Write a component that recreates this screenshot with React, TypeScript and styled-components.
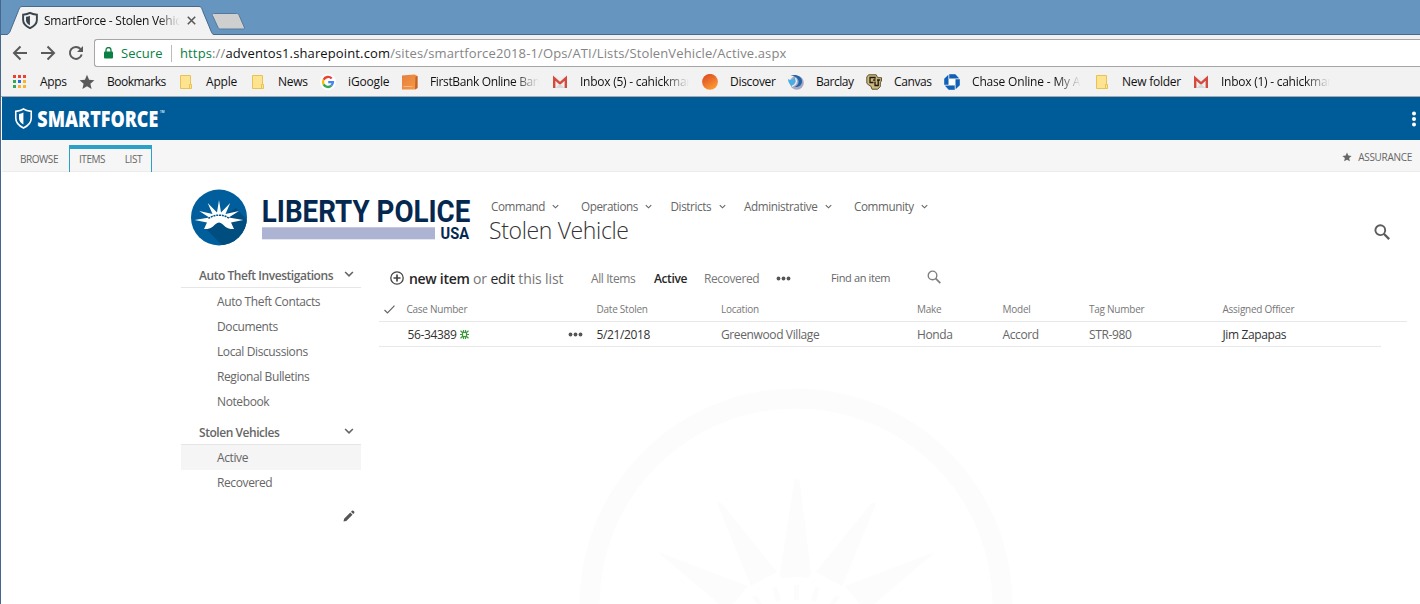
import React from "react";
import styled, { createGlobalStyle } from "styled-components";

const GlobalStyle = createGlobalStyle`
  * { box-sizing: border-box; }
  html, body { margin: 0; padding: 0; }
  body {
    font-family: "Open Sans", "Noto Sans", sans-serif;
    font-size: 12px;
    color: #666;
    background: #fff;
    overflow: hidden;
  }
  svg { display: block; flex: none; }
  ul { list-style: none; margin: 0; padding: 0; }
`;

const Window = styled.div`
  width: 1420px;
  height: 604px;
  overflow: hidden;
  display: flex;
  flex-direction: column;
  border-left: 1px solid #47688c;
`;

/* Browser chrome */

const TabStrip = styled.div`
  height: 35px;
  flex: none;
  display: flex;
  align-items: flex-end;
  background: #6696bf;
  border-bottom: 1px solid #47698b;
`;

const Tab = styled.div`
  position: relative;
  width: 207px;
  height: 29px;
  margin: 0 0 -1px 6px;
  flex: none;
`;

const TabShape = styled.svg`
  position: absolute;
  inset: 0;
`;

const TabContent = styled.div`
  position: relative;
  height: 28px;
  display: flex;
  align-items: center;
  padding: 0 0 0 15px;
`;

const Fade = styled.span<{ $width: number }>`
  width: ${(p) => p.$width}px;
  overflow: hidden;
  white-space: nowrap;
  -webkit-mask-image: linear-gradient(to right, #000 calc(100% - 22px), transparent);
  mask-image: linear-gradient(to right, #000 calc(100% - 22px), transparent);
`;

const TabTitle = styled(Fade)`
  margin-left: 6px;
  color: #111;
  font-size: 12px;
  letter-spacing: -0.24px;
`;

const TabClose = styled.svg`
  margin-left: 7px;
`;

const NewTab = styled.svg`
  margin: 0 0 4px -3px;
`;

const Toolbar = styled.div`
  height: 32px;
  flex: none;
  display: flex;
  align-items: center;
  background: #f2f2f2;
  padding: 4px 0 0 11px;
`;

const NavButtons = styled.div`
  display: flex;
  width: 82px;
  gap: 12px;
`;

const Omnibox = styled.div`
  flex: 1;
  height: 28px;
  display: flex;
  align-items: center;
  background: #fff;
  border: 1px solid #a6a6a6;
  border-right: 0;
  border-radius: 3px 0 0 3px;
  padding-left: 9px;
  font-size: 14px;
`;

const Secure = styled.span`
  color: #0b8043;
  width: 51px;
  margin-left: 8px;
  padding-right: 9px;
  border-right: 1px solid #bbb;
  line-height: 17px;
  font-size: 13px;
  letter-spacing: 0.05px;
`;

const Url = styled.span`
  margin-left: 8px;
  color: #858585;
  font-size: 13px;
  letter-spacing: 0.13px;
  white-space: nowrap;
  em { font-style: normal; color: #0b8043; }
  b { font-weight: 400; color: #111; }
`;

const BookmarkBar = styled.div`
  height: 30px;
  flex: none;
  display: flex;
  align-items: center;
  background: #f2f2f2;
  border-bottom: 1px solid #a9a9a9;
  padding-left: 11px;
`;

const BookmarkItem = styled.div<{ $slot: number }>`
  width: ${(p) => p.$slot}px;
  flex: none;
  display: flex;
  align-items: center;
  gap: 12px;
  color: #111;
`;

const BookmarkLabel = styled.span<{ $clip?: boolean; $track?: number }>`
  white-space: nowrap;
  letter-spacing: ${(p) => p.$track ?? -0.3}px;
  ${(p) =>
    p.$clip &&
    `width: 109px;
     overflow: hidden;
     mask-image: linear-gradient(to right, #000 84px, transparent);`}
`;

/* SharePoint page */

const Suite = styled.header`
  height: 43px;
  flex: none;
  margin-left: 1px;
  display: flex;
  align-items: center;
  justify-content: space-between;
  background: #005c99;
  padding: 0 3px 0 12px;
`;

const Ribbon = styled.div`
  height: 32px;
  flex: none;
  margin-left: 1px;
  display: flex;
  justify-content: space-between;
  background: #f6f6f6;
  border-bottom: 1px solid #ececec;
  font-size: 10px;
  color: #666;
  letter-spacing: -0.45px;
`;

const RibbonTabs = styled.div`
  display: flex;
  align-items: flex-start;
`;

const RibbonTab = styled.span`
  width: 67px;
  padding-left: 18px;
  line-height: 14px;
  margin-top: 12px;
`;

const RibbonGroup = styled.div`
  width: 83px;
  height: 27px;
  margin-top: 5px;
  display: flex;
  justify-content: space-between;
  border: 1px solid #2ba1c8;
  border-top-width: 4px;
  border-bottom: 0;
  padding: 3px 9px 0;
  line-height: 14px;
`;

const Follow = styled.div`
  display: flex;
  align-items: center;
  gap: 6px;
  padding: 3px 8px 0 0;
  letter-spacing: -0.3px;
`;

const Page = styled.main`
  position: relative;
  flex: 1;
  min-height: 0;
  display: flex;
  flex-direction: column;
  background: #fff;
`;

const Watermark = styled.svg`
  position: absolute;
  left: 577px;
  top: 216px;
`;

const Masthead = styled.div`
  position: relative;
  height: 90px;
  flex: none;
  display: flex;
  padding: 17px 30px 0 189px;
`;

const MastheadText = styled.div`
  flex: 1;
  padding: 7px 0 0 19px;
`;

const TopNav = styled.nav`
  display: flex;
  height: 20px;
  align-items: center;
`;

const TopNavItem = styled.div<{ $slot: number; $text: number }>`
  width: ${(p) => p.$slot}px;
  display: flex;
  align-items: center;
  white-space: nowrap;
  font-size: 11.7px;
  letter-spacing: -0.4px;
  span { width: ${(p) => p.$text + 6}px; }
`;

const Title = styled.h1`
  margin: 0 0 0 -2px;
  font-size: 23px;
  font-weight: 300;
  line-height: 28px;
  color: #333;
  letter-spacing: -0.35px;
`;

const SearchSlot = styled.div`
  padding-top: 35px;
`;

const Columns = styled.div`
  position: relative;
  display: flex;
  padding-left: 180px;
`;

const Sidebar = styled.aside`
  width: 180px;
  flex: none;
`;

const NavHeading = styled.div`
  height: 26px;
  display: flex;
  align-items: center;
  justify-content: space-between;
  border-bottom: 1px solid #e6e6e6;
  padding: 1px 7px 0 18px;
  font-weight: 600;
  letter-spacing: -0.45px;
  svg { margin-top: -2px; }
`;

const NavList = styled.ul`
  && { padding: 1px 0 5px; }
`;

const NavItem = styled.li<{ $active?: boolean }>`
  height: 25px;
  line-height: 25px;
  padding-left: 36px;
  letter-spacing: -0.39px;
  background: ${(p) => (p.$active ? "#f5f5f5" : "transparent")};
`;

const EditRow = styled.div`
  display: flex;
  justify-content: flex-end;
  padding-right: 6px;
`;

const Content = styled.section`
  margin-left: 18px;
  width: 1028px;
`;

const ListBar = styled.div`
  height: 34px;
  display: flex;
  align-items: center;
  padding: 0 0 2px 11px;
  white-space: nowrap;
`;

const NewItem = styled.div`
  width: 182px;
  margin-left: 5px;
  font-size: 14px;
  color: #777;
  letter-spacing: -0.13px;
  b { color: #262626; font-weight: 600; letter-spacing: -0.3px; }
  em { color: #262626; font-style: normal; }
`;

const View = styled.span<{ $slot: number; $current?: boolean }>`
  width: ${(p) => p.$slot}px;
  color: ${(p) => (p.$current ? "#262626" : "#777")};
  font-weight: ${(p) => (p.$current ? 600 : 400)};
  letter-spacing: -0.4px;
`;

const Find = styled.span`
  width: 97px;
  margin: -2px 0 0 40px;
  font-size: 11px;
  letter-spacing: -0.37px;
`;

const FindButton = styled.div`
  margin: -3px 0 0 -1px;
`;

const Row = styled.div<{ $width: number }>`
  width: ${(p) => p.$width}px;
  height: 25px;
  display: grid;
  grid-template-columns: 27.5px 161.5px 28.500px 124.500px 196px 85.500px 86.500px 133.500px 1fr;
  align-items: center;
  border-bottom: 1px solid #e8e8e8;
  letter-spacing: -0.38px;
  white-space: nowrap;
`;

const HeadRow = styled(Row)`
  height: 26px;
  font-size: 10px;
  color: #777;
  letter-spacing: -0.25px;
`;

const Cell = styled.span<{ $dark?: boolean }>`
  display: flex;
  align-items: center;
  gap: 3px;
  color: ${(p) => (p.$dark ? "#333" : "#666")};
`;

const CaseCell = styled(Cell)`
  padding-left: 1px;
  letter-spacing: -0.36px;
`;

const Check = styled.svg`
  margin: 2px 0 0 5px;
`;

const SHIELD = "M10 1C7.6 2.4 4.6 3 1.4 3.3V10c0 4.6 3.6 7.800 8.600 10 5-2.200 8.600-5.400 8.600-10V3.300C15.400 3 12.400 2.400 10 1z";

const Shield = ({ w, h, color, weight }: { w: number; h: number; color: string; weight: number }) => (
  <svg width={w} height={h} viewBox="0 0 20 21" preserveAspectRatio="none">
    <path d={SHIELD} fill="none" stroke={color} strokeWidth={weight} />
    <path d="M9.900 4.600C8 5.400 6.800 5.700 5 6v4.200c0 2.600 1.700 4.800 4.900 6.200z" fill={color} />
  </svg>
);

const Chevron = ({ size = 7, weight = 1.3 }: { size?: number; weight?: number }) => (
  <svg width={size} height={size} viewBox="0 0 8 8" fill="none" stroke="#666" strokeWidth={weight}>
    <path d="M.9 2.400 4 5.500l3.100-3.100" />
  </svg>
);

const Dots = () => (
  <svg width="15" height="5" viewBox="0 0 15 5" fill="#555">
    <circle cx="2.500" cy="2.500" r="1.900" />
    <circle cx="7.500" cy="2.500" r="1.900" />
    <circle cx="12.500" cy="2.500" r="1.900" />
  </svg>
);

const Magnifier = ({ size, color, weight }: { size: number; color: string; weight: number }) => (
  <svg width={size} height={size} viewBox="0 0 16 16" fill="none" stroke={color} strokeWidth={weight}>
    <circle cx="6.300" cy="6.200" r="4.900" />
    <path d="m9.800 9.700 5.400 5.400" strokeWidth={weight + 0.4} />
  </svg>
);

const STAR = "M8 .8l2.100 4.900 5.300.5-4 3.500 1.200 5.200L8 12.200l-4.600 2.700 1.200-5.200-4-3.500 5.300-.5z";

const Icon = ({ kind }: { kind: string }) => {
  switch (kind) {
    case "apps": {
      const colors = ["#ea4335", "#ea4335", "#ea4335", "#34a853", "#1a73e8", "#fbb32b", "#34a853", "#fbb32b", "#fbb32b"];
      return (
        <svg width="16" height="16">
          {colors.map((c, i) => (
            <rect key={i} x={1 + (i % 3) * 5} y={1 + Math.floor(i / 3) * 5} width="3" height="3" fill={c} />
          ))}
        </svg>
      );
    }
    case "star":
      return (
        <svg width="16" height="16">
          <path d={STAR} fill="#5a5a5a" />
        </svg>
      );
    case "folder":
      return (
        <svg width="16" height="16">
          <path d="M2.500 1.500h10v9h1v4h-11z" fill="#fee391" stroke="#e9c254" />
          <path d="M11.500 14v-3.500h1.500" fill="none" stroke="#e9c254" />
        </svg>
      );
    case "google":
      return (
        <svg width="16" height="16" viewBox="0 0 16 16" fill="none" strokeWidth="2.300">
          <circle cx="8" cy="8" r="8" fill="#fff" />
          <path d="M11.700 4.500A5 5 0 0 0 3.600 5.700" stroke="#ea4335" />
          <path d="M3.600 5.700a5 5 0 0 0 0 4.700" stroke="#fbbc05" />
          <path d="M3.600 10.400a5 5 0 0 0 7.700 1.300" stroke="#34a853" />
          <path d="M11.300 11.700A5 5 0 0 0 12.900 8.100H8.200" stroke="#4285f4" />
        </svg>
      );
    case "bank":
      return (
        <svg width="16" height="16">
          <defs>
            <linearGradient id="cover" x1="0" y1="0" x2="1" y2="1">
              <stop offset="0" stopColor="#e57f3c" />
              <stop offset="1" stopColor="#f79a45" />
            </linearGradient>
          </defs>
          <path d="M0 1.500 12.500.5 15.500 2v12l-2.500 1.500H0z" fill="url(#cover)" />
          <path d="M13.500 2.500 15.500 2v12l-2.500 1.500z" fill="#bf6430" />
          <path d="M1.500 12.500h9" stroke="#fbc9a0" strokeWidth=".7" />
        </svg>
      );
    case "gmail":
      return (
        <svg width="16" height="16">
          <path d="M1 3h14v11H1z" fill="#eee" />
          <path d="M2.200 14V4.200L8 9.400l5.800-5.200V14" fill="none" stroke="#d54a3f" strokeWidth="2.400" />
          <path d="m3.500 14 4.500-4 4.500 4z" fill="#d9d9d9" />
        </svg>
      );
    case "discover":
      return (
        <svg width="16" height="16">
          <defs>
            <linearGradient id="sun" x1="0" y1="0" x2=".6" y2="1">
              <stop offset="0" stopColor="#d9431f" />
              <stop offset="1" stopColor="#fb9a35" />
            </linearGradient>
          </defs>
          <circle cx="8" cy="7.800" r="7.900" fill="url(#sun)" />
        </svg>
      );
    case "barclay":
      return (
        <svg width="16" height="16">
          <circle cx="8.800" cy="8.800" r="7" fill="#aaa6c2" />
          <path d="M2.500 1.500C9-.5 14.500 3 14 8c-.4 3.500-3.500 5.500-7.500 5 3.500-1.500 5-4.500 3.500-7.500C8.500 3 6 1.800 2.500 1.500z" fill="#2166a8" />
          <path d="M0 5c2.500 1.500 5 1 6.500-1.500C8.500 6.500 7.500 10 4 12 1.500 10.500 0 8 0 5z" fill="#4aaee6" />
          <path d="M4 12.300c4-1.300 5.500-4.800 3.500-8.300" fill="none" stroke="#dff3fc" strokeWidth="1.300" />
        </svg>
      );
    case "canvas":
      return (
        <svg width="16" height="16" fill="none">
          <path d="M2.500.8h7.700l1.500 2.900h3.800v3.500l-1.200.8v4.500l-2.500 2.700H6L4.800 12 2.500 11 .8 9V3z" fill="#cdb87c" stroke="#5c5236" />
          <path d="M9 4.800V3.500H4v5h3.500M7.500 6.500V6M9 7.500v4h3.200V6.500M11 6h3.200M7.300 6h2.200" stroke="#1d1910" strokeWidth="1.300" />
        </svg>
      );
    default:
      return (
        <svg width="16" height="16">
          <path d="M5 4.500h6.500V11H5z" fill="#fff" />
          <path
            d="M5 0h6.300L15 3.900v.8H5zM16 5v6.300L12.100 15h-.8V5zM11 16H4.700L1 12.100v-.8h10zM0 11V4.700L3.900 1h.8v10z"
            fill="#1160b7"
            stroke="#f2f2f2"
            strokeWidth=".4"
          />
        </svg>
      );
  }
};

type Mark = { kind: string; label: string; slot: number; clip?: boolean; track?: number };

const BOOKMARKS: Mark[] = [
  { kind: "apps", label: "Apps", slot: 67 },
  { kind: "star", label: "Bookmarks", slot: 99, track: -0.5 },
  { kind: "folder", label: "Apple", slot: 72, track: -0.2 },
  { kind: "folder", label: "News", slot: 70 },
  { kind: "google", label: "iGoogle", slot: 82, track: -0.15 },
  { kind: "bank", label: "FirstBank Online Bank", slot: 150, clip: true, track: -0.36 },
  { kind: "gmail", label: "Inbox (5) - cahickman", slot: 150, clip: true, track: -0.25 },
  { kind: "discover", label: "Discover", slot: 86 },
  { kind: "barclay", label: "Barclay", slot: 78, track: -0.45 },
  { kind: "canvas", label: "Canvas", slot: 78, track: -0.4 },
  { kind: "chase", label: "Chase Online - My Ac", slot: 150, clip: true, track: -0.18 },
  { kind: "folder", label: "New folder", slot: 99, track: -0.25 },
  { kind: "gmail", label: "Inbox (1) - cahickman", slot: 140, clip: true, track: -0.25 },
];

const MENUS = [
  { label: "Command", slot: 90, text: 54.5 },
  { label: "Operations", slot: 89.5, text: 57.5 },
  { label: "Districts", slot: 73.5, text: 42 },
  { label: "Administrative", slot: 110, text: 75 },
  { label: "Community", slot: 90, text: 60.5 },
];

const LibertyLogo = () => (
  <svg width="282" height="58" viewBox="0 0 282 58">
    <defs>
      <clipPath id="disc">
        <circle cx="29" cy="28.500" r="28" />
      </clipPath>
    </defs>
    <circle cx="29" cy="28.500" r="28" fill="#005e9c" />
    <g clipPath="url(#disc)">
      <path d="M14 38 34 58h24V32L46 19z" fill="#004d80" />
    </g>
    <path
      d="M29 11l2 12.400L40.200 14l-4.700 11L49 22l-10.300 6.500L53.200 31 41 33.500l3 6.500c-3.300.2-6.500-.5-8.700-2.300-2.200-1.800-3.800-4.200-6.300-4.200s-4.100 2.400-6.300 4.200c-2.200 1.800-5.400 2.500-8.700 2.300l3-6.500L4.600 31l14.700-2.500L9.200 22l13.300 3-4.800-11L27 23.400z"
      fill="#fff"
    />
    <path d="M18.500 29.500c6-4.500 15-4.500 21 0" fill="none" stroke="#00538a" strokeWidth="1.500" strokeDasharray="2 .8" />
    <text x="71.800" y="32.600" fontFamily="Roboto" fontWeight="700" fontSize="32" textLength="208.500" lengthAdjust="spacingAndGlyphs" fill="#04284f">
      LIBERTY POLICE
    </text>
    <rect x="72" y="38.300" width="173" height="12" fill="#adb3d2" />
    <text x="250.500" y="49.800" fontFamily="Roboto" fontWeight="700" fontSize="16.500" textLength="28.500" lengthAdjust="spacingAndGlyphs" fill="#04284f">
      USA
    </text>
  </svg>
);

const SmartForceLogo = () => (
  <svg width="154" height="26" viewBox="0 0 154 26">
    <g transform="translate(.5 2)">
      <Shield w={18} h={21} color="#fff" weight={1.8} />
    </g>
    <text x="23.300" y="20.800" fontFamily="Open Sans" fontWeight="800" fontSize="22.500" textLength="121" lengthAdjust="spacingAndGlyphs" fill="#fff">
      SMARTFORCE
    </text>
    <text x="146" y="7" fontFamily="Open Sans" fontWeight="600" fontSize="4" textLength="4.500" lengthAdjust="spacingAndGlyphs" fill="#fff">
      TM
    </text>
  </svg>
);

export default function App() {
  return (
    <Window>
      <GlobalStyle />
      <TabStrip>
        <Tab>
          <TabShape width="207" height="29" viewBox="0 0 207 29">
            <path d="M0 29v-.5C2 28 3 26 4 23l7.500-18.500C12.500 2 13 .5 15 .5h177c2 0 2.500 1 3.500 4L204 25c1 2.500 1.500 3.500 3 3.500v.5z" fill="#f2f2f2" />
            <path d="M0 28.500C2 28 3 26 4 23l7.500-18.500C12.500 2 13 .5 15 .5h177c2 0 2.500 1 3.500 4L204 25c1 2.500 1.500 3.500 3 3.500" fill="none" stroke="#47698b" />
          </TabShape>
          <TabContent>
            <Shield w={16} h={17} color="#3a444d" weight={2.4} />
            <TabTitle $width={136}>SmartForce - Stolen Vehicle</TabTitle>
            <TabClose width="9" height="9" viewBox="0 0 9 9" stroke="#5a5a5a" strokeWidth="1.600">
              <path d="m.8.8 7.400 7.400M8.200.8.800 8.200" />
            </TabClose>
          </TabContent>
        </Tab>
        <NewTab width="35" height="17" viewBox="0 0 35 17">
          <path d="M2.500.5h23c1.500 0 2 .5 2.700 2l5 11.500c.6 1.500.3 2-1 2H9.500c-1.500 0-2-.5-2.700-2L1.500 2.500c-.6-1.500-.5-2 1-2z" fill="#cfcfcf" stroke="#54799c" />
        </NewTab>
      </TabStrip>
      <Toolbar>
        <NavButtons>
          <svg width="16" height="16" fill="none" stroke="#5a5a5a" strokeWidth="2">
            <path d="M15 8H2.500M8.500 1.500 2 8l6.500 6.500" />
          </svg>
          <svg width="16" height="16" fill="none" stroke="#5a5a5a" strokeWidth="2">
            <path d="M1 8h12.500M7.500 1.500 14 8l-6.500 6.500" />
          </svg>
          <svg width="16" height="16" fill="none" stroke="#5a5a5a" strokeWidth="2">
            <path d="M13.700 9.500A6 6 0 1 1 12.500 4" />
            <path d="M15 1v6H9z" fill="#5a5a5a" stroke="none" />
          </svg>
        </NavButtons>
        <Omnibox>
          <svg width="9" height="12" viewBox="0 0 9 12">
            <rect x="0" y="4.500" width="9" height="7" rx="1" fill="#0b8043" />
            <path d="M2 5V3a2.500 2.500 0 0 1 5 0v2" fill="none" stroke="#0b8043" strokeWidth="1.300" />
          </svg>
          <Secure>Secure</Secure>
          <Url>
            <em>https</em>://<b>adventos1.sharepoint.com</b>/sites/smartforce2018-1/Ops/ATI/Lists/StolenVehicle/Active.aspx
          </Url>
        </Omnibox>
      </Toolbar>
      <BookmarkBar>
        {BOOKMARKS.map((m, i) => (
          <BookmarkItem key={i} $slot={m.slot}>
            <Icon kind={m.kind} />
            <BookmarkLabel $clip={m.clip} $track={m.track}>
              {m.label}
            </BookmarkLabel>
          </BookmarkItem>
        ))}
      </BookmarkBar>

      <Suite>
        <SmartForceLogo />
        <svg width="6" height="16" viewBox="0 0 6 16" fill="#fff">
          <circle cx="3" cy="2.500" r="2" />
          <circle cx="3" cy="8" r="2" />
          <circle cx="3" cy="13.500" r="2" />
        </svg>
      </Suite>
      <Ribbon>
        <RibbonTabs>
          <RibbonTab>BROWSE</RibbonTab>
          <RibbonGroup>
            <span>ITEMS</span>
            <span>LIST</span>
          </RibbonGroup>
        </RibbonTabs>
        <Follow>
          <svg width="10" height="10" viewBox="0 0 16 16">
            <path d={STAR} fill="#666" />
          </svg>
          ASSURANCE
        </Follow>
      </Ribbon>

      <Page>
        <Watermark width="436" height="216" viewBox="579 389 436 216" fill="#fcfcfc">
          <circle cx="797" cy="606" r="206.500" fill="none" stroke="#fcfcfc" strokeWidth="20" />
          <path d="M798 480q3 0 3 4l11 90-3 5h-27l-1-4 14-91q0-4 3-4z" />
          <path d="M719 504q3-1 5 2l54 67-26 14-33-80z" />
          <path d="M876 504q-3-1-5 2l-54 67 26 14 33-80z" />
          <path d="M659 553l90 34-15 18h-14z" />
          <path d="M936 553l-90 34 15 18h14z" />
          <path d="M733 606q64-56 128 0" fill="#fff" />
          <path d="M795 586h5v15h-5zM773 589l5-1 4 13-5 2zM821 589l-5-1-4 13 5 2zM753 598l5-2 5 9h-5zM841 598l-5-2-5 9h5z" />
        </Watermark>
        <Masthead>
          <LibertyLogo />
          <MastheadText>
            <TopNav>
              {MENUS.map((m) => (
                <TopNavItem key={m.label} $slot={m.slot} $text={m.text}>
                  <span>{m.label}</span>
                  <Chevron />
                </TopNavItem>
              ))}
            </TopNav>
            <Title>Stolen Vehicle</Title>
          </MastheadText>
          <SearchSlot>
            <Magnifier size={16} color="#5c5c5c" weight={1.9} />
          </SearchSlot>
        </Masthead>
        <Columns>
          <Sidebar>
            <NavHeading>
              Auto Theft Investigations
              <Chevron size={10} weight={1.3} />
            </NavHeading>
            <NavList>
              <NavItem>Auto Theft Contacts</NavItem>
              <NavItem>Documents</NavItem>
              <NavItem>Local Discussions</NavItem>
              <NavItem>Regional Bulletins</NavItem>
              <NavItem>Notebook</NavItem>
            </NavList>
            <NavHeading>
              Stolen Vehicles
              <Chevron size={10} weight={1.3} />
            </NavHeading>
            <ul>
              <NavItem $active>Active</NavItem>
              <NavItem>Recovered</NavItem>
            </ul>
            <EditRow>
              <svg width="12" height="42" viewBox="0 0 12 42" fill="#555">
                <path d="m.5 26.500.6-2.800 6.200-6.200 2.200 2.200-6.200 6.200zM8 16.800l1-1q.8-.5 1.400 0l.8.800q.5.700 0 1.400l-1 1z" />
              </svg>
            </EditRow>
          </Sidebar>
          <Content>
            <ListBar>
              <svg width="14" height="14" viewBox="0 0 14 14" fill="none" stroke="#444" strokeWidth="1.300">
                <circle cx="7" cy="7" r="6.200" />
                <path d="M7 3.500v7M3.500 7h7" strokeWidth="1.700" />
              </svg>
              <NewItem>
                <b>new item</b> or <em>edit</em> this list
              </NewItem>
              <View $slot={63}>All Items</View>
              <View $slot={50} $current>Active</View>
              <View $slot={72}>Recovered</View>
              <Dots />
              <Find>Find an item</Find>
              <FindButton>
                <Magnifier size={14} color="#808080" weight={1.6} />
              </FindButton>
            </ListBar>
            <HeadRow $width={1028}>
              <Check width="11" height="9" viewBox="0 0 11 9" fill="none" stroke="#666" strokeWidth="1.200">
                <path d="m.5 5 3 3L10.500.7" />
              </Check>
              <span>Case Number</span>
              <span />
              <span>Date Stolen</span>
              <span>Location</span>
              <span>Make</span>
              <span>Model</span>
              <span>Tag Number</span>
              <span>Assigned Officer</span>
            </HeadRow>
            <Row $width={1002}>
              <span />
              <CaseCell $dark>
                56-34389
                <svg width="9" height="9" viewBox="0 0 9 9" fill="none" stroke="#3c9a3c" strokeWidth="1.200">
                  <rect x="2.500" y="2.500" width="4" height="4" />
                  <path d="M.5.8 2.500 2.500M8.500.8l-2 1.700M.5 8.200l2-1.700M8.500 8.200l-2-1.700M3.500 0v2M5.500 0v2M3.500 7v2M5.500 7v2M0 4.500h2M7 4.500h2" />
                </svg>
              </CaseCell>
              <Cell>
                <Dots />
              </Cell>
              <Cell $dark>5/21/2018</Cell>
              <Cell>Greenwood Village</Cell>
              <Cell>Honda</Cell>
              <Cell>Accord</Cell>
              <Cell>STR-980</Cell>
              <Cell $dark>Jim Zapapas</Cell>
            </Row>
          </Content>
        </Columns>
      </Page>
    </Window>
  );
}
